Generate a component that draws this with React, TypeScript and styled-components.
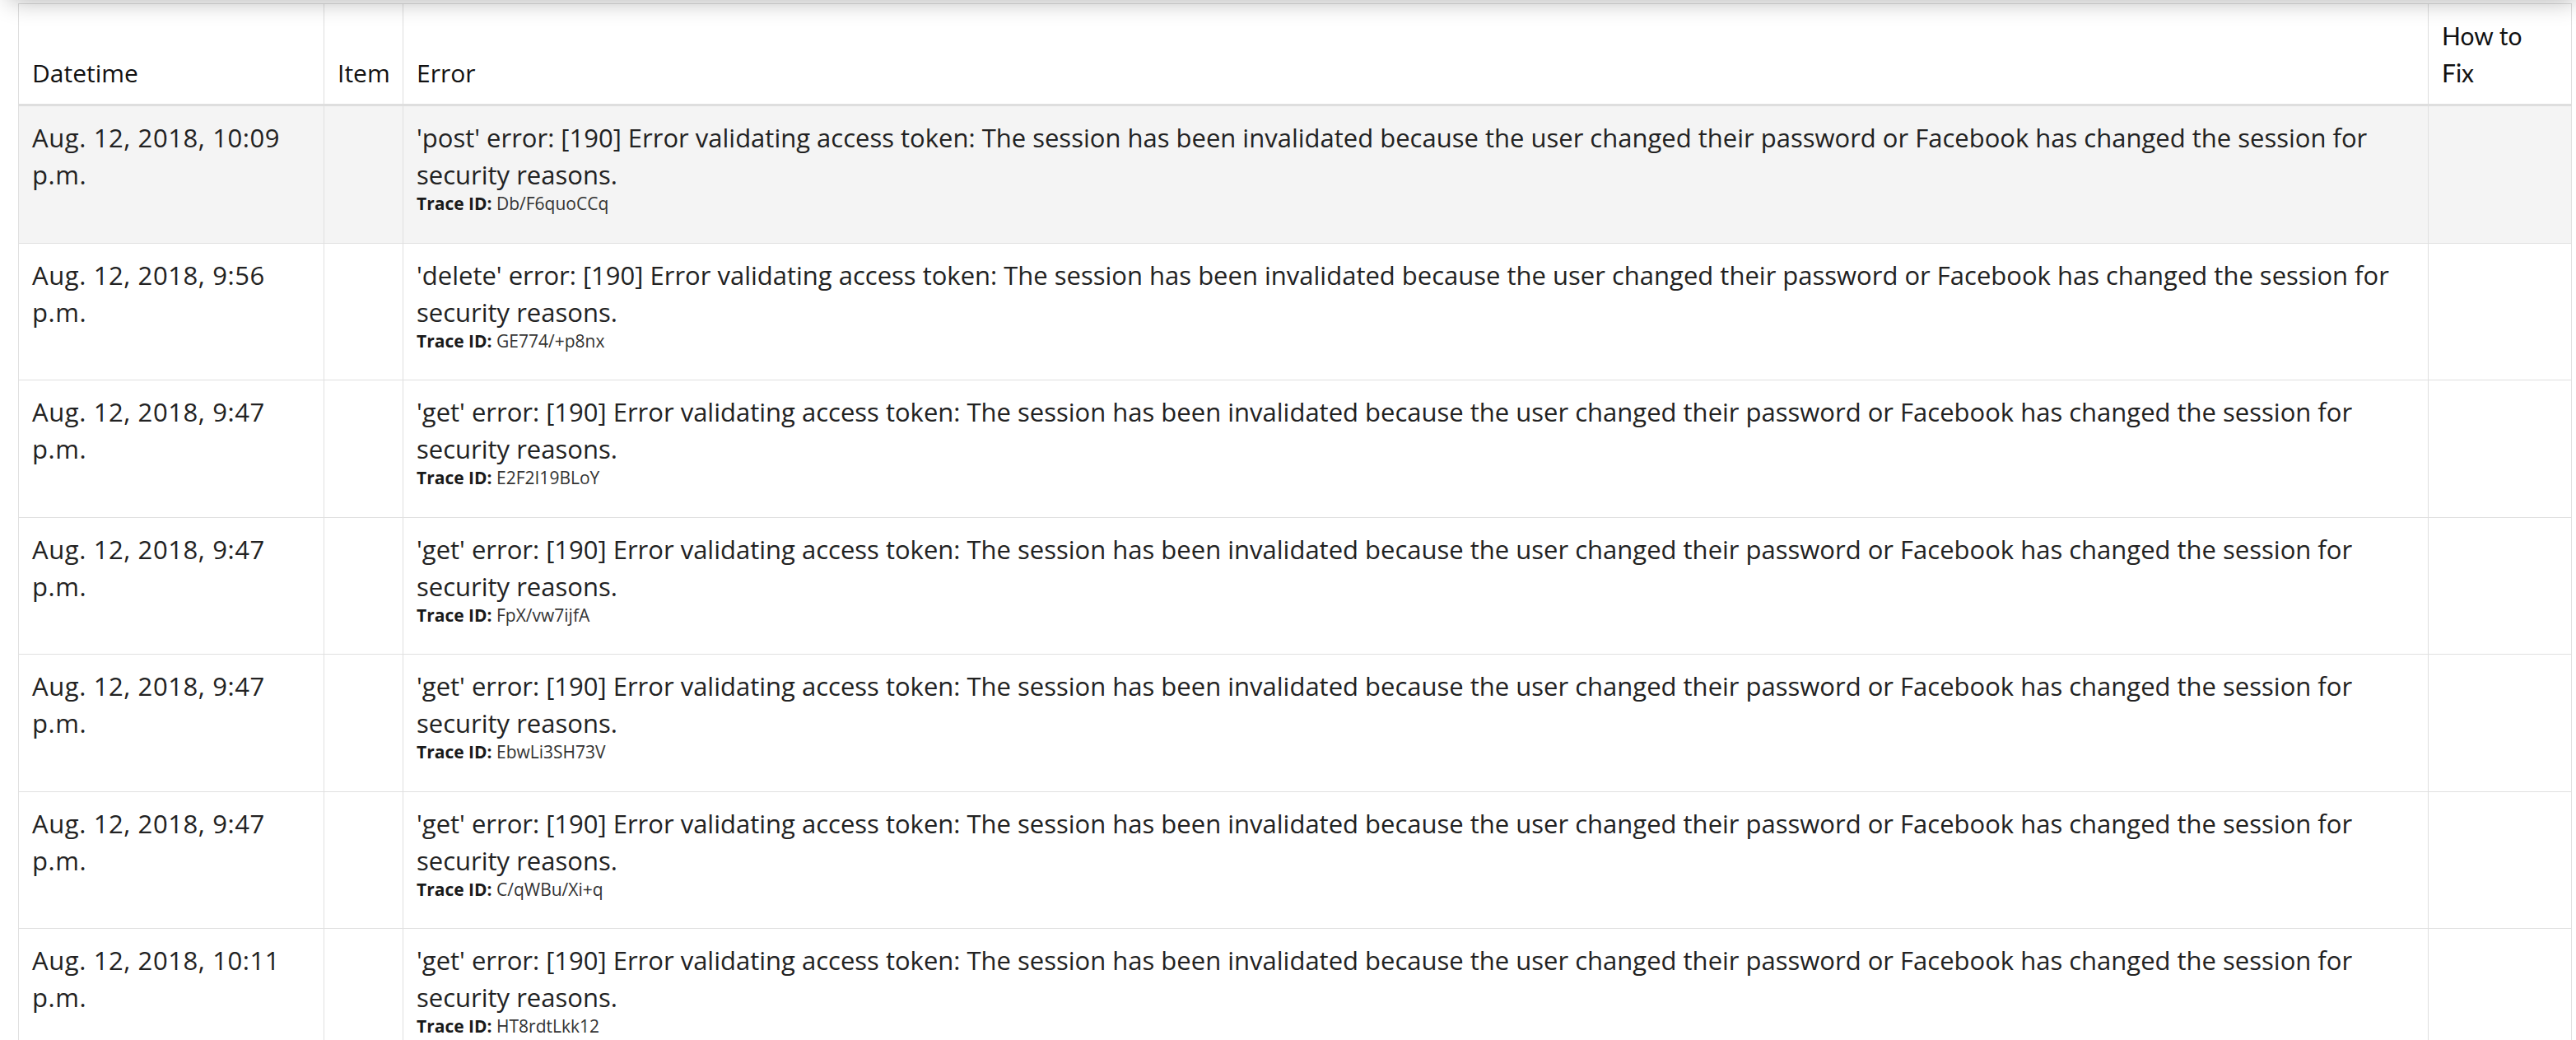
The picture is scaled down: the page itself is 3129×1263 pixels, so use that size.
import React from "react";
import styled, { createGlobalStyle } from "styled-components";

const GlobalStyle = createGlobalStyle`
  html, body {
    margin: 0;
    padding: 0;
    background: #ffffff;
  }
  body {
    font-family: "Open Sans", Lato, sans-serif;
    color: #222222;
  }
`;

const TopShadow = styled.div`
  position: fixed;
  top: -30px;
  left: 12px;
  right: 0;
  height: 30px;
  background: #ffffff;
  box-shadow: 0 0 30px rgba(0, 0, 0, 0.32);
  z-index: 10;
`;

const Page = styled.main`
  padding: 4px 6px 0 22px;
`;

const Table = styled.table`
  width: 3101px;
  table-layout: fixed;
  border-collapse: collapse;
  font-family: "Open Sans", Lato, sans-serif;
  font-size: 31px;
  line-height: 45px;
  color: #222222;
`;

const Col = styled.col<{ $w: number }>`
  width: ${(p) => p.$w}px;
`;

const HeadCell = styled.th<{ $lato?: boolean }>`
  text-align: left;
  vertical-align: bottom;
  font-weight: 400;
  font-size: 30px;
  color: #111111;
  height: 120px;
  box-sizing: border-box;
  padding: 16px 16px 15px;
  border: 1px solid #dedede;
  border-bottom: 3px solid #dedede;
  font-family: ${(p) => (p.$lato ? "Lato" : "\"Open Sans\"")}, sans-serif;
`;

const Row = styled.tr<{ $highlighted?: boolean }>`
  background: ${(p) => (p.$highlighted ? "#f4f4f4" : "#ffffff")};
`;

const Cell = styled.td`
  vertical-align: top;
  padding: 16px;
  border: 1px solid #e0e0e0;
  word-wrap: break-word;
`;

const DateCell = styled(Cell)`
  padding-right: 22px;
  letter-spacing: 0.6px;
`;

const Message = styled.div`
  margin: 0;
`;

const Trace = styled.div`
  font-size: 21px;
  line-height: 24px;
  margin-bottom: 19.5px;
  color: #333333;
`;

const TraceLabel = styled.span`
  font-weight: 700;
  color: #1a1a1a;
`;

type Entry = {
  datetime: string;
  method: string;
  trace: string;
  highlighted?: boolean;
};

const entries: Entry[] = [
  { datetime: "Aug. 12, 2018, 10:09 p.m.", method: "post", trace: "Db/F6quoCCq", highlighted: true },
  { datetime: "Aug. 12, 2018, 9:56 p.m.", method: "delete", trace: "GE774/+p8nx" },
  { datetime: "Aug. 12, 2018, 9:47 p.m.", method: "get", trace: "E2F2I19BLoY" },
  { datetime: "Aug. 12, 2018, 9:47 p.m.", method: "get", trace: "FpX/vw7ijfA" },
  { datetime: "Aug. 12, 2018, 9:47 p.m.", method: "get", trace: "EbwLi3SH73V" },
  { datetime: "Aug. 12, 2018, 9:47 p.m.", method: "get", trace: "C/qWBu/Xi+q" },
  { datetime: "Aug. 12, 2018, 10:11 p.m.", method: "get", trace: "HT8rdtLkk12" },
];

const message =
  "error: [190] Error validating access token: The session has been invalidated because the user changed their password or Facebook has changed the session for security reasons.";

export default function App() {
  return (
    <>
      <GlobalStyle />
      <TopShadow />
      <Page>
        <Table>
          <colgroup>
            <Col $w={371} />
            <Col $w={96} />
            <Col $w={2460} />
            <Col $w={174} />
          </colgroup>
          <thead>
            <tr>
              <HeadCell>Datetime</HeadCell>
              <HeadCell>Item</HeadCell>
              <HeadCell>Error</HeadCell>
              <HeadCell $lato>How to Fix</HeadCell>
            </tr>
          </thead>
          <tbody>
            {entries.map((e, i) => (
              <Row key={i} $highlighted={e.highlighted}>
                <DateCell>{e.datetime}</DateCell>
                <Cell />
                <Cell>
                  <Message>{`'${e.method}' ${message}`}</Message>
                  <Trace>
                    <TraceLabel>Trace ID:</TraceLabel>
                    {` ${e.trace}`}
                  </Trace>
                </Cell>
                <Cell />
              </Row>
            ))}
          </tbody>
        </Table>
      </Page>
    </>
  );
}
